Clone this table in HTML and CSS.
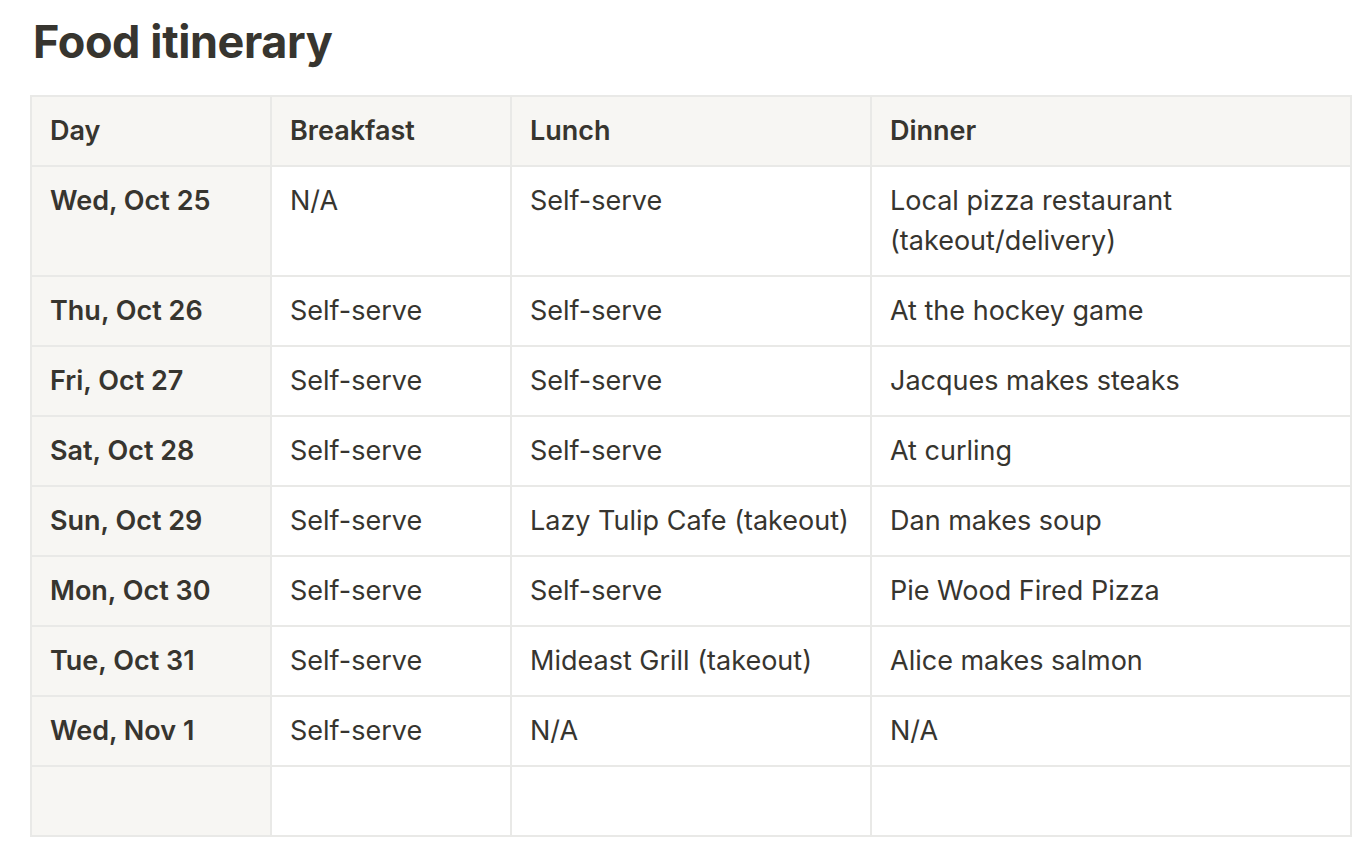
FILE: index.html
```html
<!DOCTYPE html>
<html lang="en">
<head>
<meta charset="utf-8">
<title>Food itinerary</title>
<link rel="stylesheet" href="styles.css">
</head>
<body>
<main class="page">
  <h1 class="title">Food itinerary</h1>
  <table class="itinerary">
    <colgroup>
      <col class="c-day"><col class="c-bf"><col class="c-lunch"><col class="c-dinner">
    </colgroup>
    <thead>
      <tr><th class="hdr">Day</th><th class="hdr">Breakfast</th><th class="hdr">Lunch</th><th class="hdr">Dinner</th></tr>
    </thead>
    <tbody>
      <tr><th class="day">Wed, Oct 25</th><td>N/A</td><td>Self-serve</td><td>Local pizza restaurant (takeout/delivery)</td></tr>
      <tr><th class="day">Thu, Oct 26</th><td>Self-serve</td><td>Self-serve</td><td>At the hockey game</td></tr>
      <tr><th class="day">Fri, Oct 27</th><td>Self-serve</td><td>Self-serve</td><td>Jacques makes steaks</td></tr>
      <tr><th class="day">Sat, Oct 28</th><td>Self-serve</td><td>Self-serve</td><td>At curling</td></tr>
      <tr><th class="day">Sun, Oct 29</th><td>Self-serve</td><td>Lazy Tulip Cafe (takeout)</td><td>Dan makes soup</td></tr>
      <tr><th class="day">Mon, Oct 30</th><td>Self-serve</td><td>Self-serve</td><td>Pie Wood Fired Pizza</td></tr>
      <tr><th class="day">Tue, Oct 31</th><td>Self-serve</td><td>Mideast Grill (takeout)</td><td>Alice makes salmon</td></tr>
      <tr><th class="day">Wed, Nov 1</th><td>Self-serve</td><td>N/A</td><td>N/A</td></tr>
      <tr class="empty"><th class="day"></th><td></td><td></td><td></td></tr>
    </tbody>
  </table>
</main>
</body>
</html>
```
FILE: styles.css
```css
* { box-sizing: border-box; }
html, body { margin: 0; padding: 0; background: #ffffff; }
body {
  font-family: Inter, "Noto Sans", "Liberation Sans", sans-serif;
  color: #37352f;
}
.page {
  padding: 14px 0 0 30px;
}
.title {
  margin: 0 0 0 3px;
  font-size: 45px;
  font-weight: 700;
  line-height: 56px;
  letter-spacing: -0.4px;
  height: 81px;
}
.itinerary {
  border-collapse: separate;
  border-spacing: 0;
  table-layout: fixed;
  width: 1322px;
  border-top: 2px solid #e9e9e7;
  border-left: 2px solid #e9e9e7;
  font-size: 27px;
  line-height: 40px;
}
.c-day { width: 240px; }
.c-bf { width: 240px; }
.c-lunch { width: 360px; }
.c-dinner { width: 480px; }
.itinerary th,
.itinerary td {
  border-right: 2px solid #e9e9e7;
  border-bottom: 2px solid #e9e9e7;
  padding: 14px 18px;
  text-align: left;
  vertical-align: top;
  height: 70px;
  font-weight: 400;
}
.itinerary .hdr {
  background: #f7f6f3;
  font-weight: 600;
}
.itinerary .day {
  background: #f7f6f3;
  font-weight: 600;
}
```
